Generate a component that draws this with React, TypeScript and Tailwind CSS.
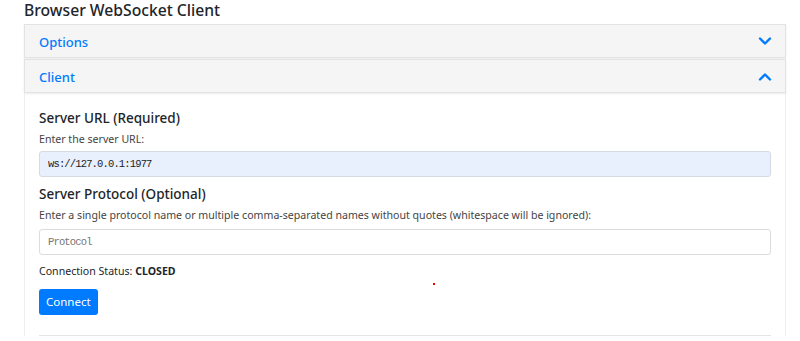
import React from 'react'

const sans = { fontFamily: '"Noto Sans", "Open Sans", sans-serif' }
const mono = { fontFamily: '"Liberation Mono", monospace', letterSpacing: '-0.85px' }

function Chevron({ up }: { up?: boolean }) {
  return (
    <svg width="14" height="9" viewBox="0 0 14 9" className="text-[#007bff]">
      <path
        d={up ? 'M2 7.5 L7 2.5 L12 7.5' : 'M2 1.5 L7 6.5 L12 1.5'}
        fill="none"
        stroke="currentColor"
        strokeWidth="2.4"
        strokeLinecap="round"
        strokeLinejoin="round"
      />
    </svg>
  )
}

function PanelHeader({ title, open }: { title: string; open?: boolean }) {
  return (
    <div className="flex h-[34px] items-center justify-between border border-[#e3e3e3] bg-[#f5f5f5] pl-[14px] pr-[13px] shadow-[0_1px_2px_rgba(0,0,0,0.08)]">
      <span className="mt-[3px] text-[13px] font-medium text-[#007bff]">{title}</span>
      <Chevron up={open} />
    </div>
  )
}

export default function App() {
  return (
    <div className="relative h-[341px] w-[800px] overflow-hidden bg-white text-[#212529]" style={sans}>
      <h1 className="pl-[24px] text-[15.7px] leading-[21px] font-medium">Browser WebSocket Client</h1>

      <div className="ml-[24px] mt-[3px] w-[762px]">
        <PanelHeader title="Options" />
        <div className="mt-px">
          <PanelHeader title="Client" open />
        </div>

        {/* Client body */}
        <div className="border-x border-[#eeeeee] px-[14px] pt-[15px]">
          <h2 className="text-[13.5px] leading-[20px] font-medium">Server URL (Required)</h2>
          <p className="mt-[4px] text-[10.6px] leading-[15px] text-[#444]">Enter the server URL:</p>
          <input
            readOnly
            value="ws://127.0.0.1:1977"
            className="mt-[4px] block h-[26px] w-full rounded-[3px] border border-[#d6dbe3] bg-[#e8f0fe] px-[8px] text-[10.5px] text-[#222] outline-none"
            style={mono}
          />

          <h2 className="mt-[7px] text-[13.5px] leading-[20px] font-medium">Server Protocol (Optional)</h2>
          <p className="mt-[4px] text-[10.6px] leading-[15px] text-[#444]">
            Enter a single protocol name or multiple comma-separated names without quotes (whitespace will be ignored):
          </p>
          <input
            placeholder="Protocol"
            className="mt-[6px] block h-[26px] w-full rounded-[3px] border border-[#dcdcdc] bg-white px-[8px] text-[10.5px] text-[#222] outline-none placeholder:text-[#777]"
            style={mono}
          />

          <p className="mt-[9px] text-[10.6px] leading-[15px]">
            Connection Status: <span className="font-bold">CLOSED</span>
          </p>

          <button className="mt-[10px] h-[26px] rounded-[3px] bg-[#007bff] px-[7px] text-[11.5px] text-white">
            Connect
          </button>

          <hr className="mt-[20px] border-t border-[#e5e5e5]" />
        </div>
      </div>

      <span className="absolute left-[433px] top-[283px] h-[2px] w-[2px] bg-[#e00]" />
    </div>
  )
}
